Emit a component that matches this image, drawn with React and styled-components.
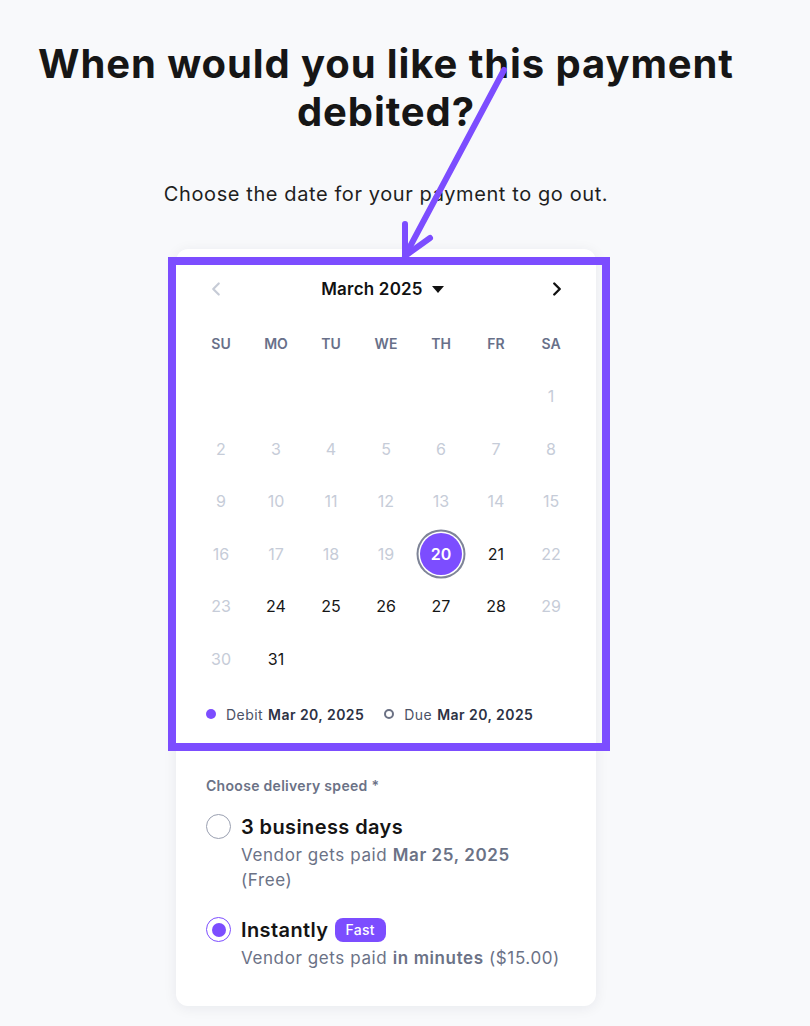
import React from "react";
import styled, { createGlobalStyle } from "styled-components";
import { ChevronLeft, ChevronRight } from "lucide-react";

const PURPLE = "#7c4dff";
const FONT = `"Inter", "Open Sans", "Noto Sans", sans-serif`;

const Global = createGlobalStyle`
  html, body { margin: 0; padding: 0; background: #f8f9fb; }
  body { font-family: ${FONT}; color: #1a1a1a; }
  * { box-sizing: border-box; }
`;

const Page = styled.div`
  position: relative;
  width: 810px;
  min-height: 1026px;
  padding: 40px 38px 0 0;
  display: flex;
  flex-direction: column;
  align-items: center;
`;

const Title = styled.h1`
  margin: 0;
  font-size: 40px;
  line-height: 48px;
  font-weight: 700;
  text-align: center;
  color: #161616;
  letter-spacing: 0.9px;
  white-space: nowrap;
`;

const Subtitle = styled.p`
  margin: 43px 0 40px;
  font-size: 20px;
  line-height: 30px;
  color: #1f1f1f;
  letter-spacing: 0.6px;
`;

const Card = styled.div`
  position: relative;
  width: 420px;
  background: #fff;
  border-radius: 12px;
  box-shadow: 0 2px 14px rgba(20, 30, 60, 0.07);
`;

const CalendarSection = styled.div`
  padding: 24px 17.5px 18px;
`;

const MonthHeader = styled.div`
  display: flex;
  align-items: center;
  justify-content: space-between;
  height: 32px;
  padding: 0 10px 0 11px;
`;

const NavButton = styled.button`
  border: 0;
  background: none;
  padding: 0;
  display: flex;
  color: ${(p) => (p.$disabled ? "#c6cbd6" : "#111")};
`;

const MonthLabel = styled.div`
  display: flex;
  align-items: center;
  gap: 9px;
  font-size: 17px;
  font-weight: 600;
  color: #111;
  letter-spacing: 0.2px;
  margin-left: -8px;
`;

const Caret = styled.span`
  width: 0;
  height: 0;
  border-left: 6px solid transparent;
  border-right: 6px solid transparent;
  border-top: 7px solid #111;
`;

const Grid = styled.div`
  margin-top: 12.5px;
  display: grid;
  grid-template-columns: repeat(7, 55px);
  grid-auto-rows: 52.5px;
`;

const DayName = styled.div`
  display: flex;
  align-items: center;
  justify-content: center;
  font-size: 14px;
  font-weight: 600;
  color: #687089;
`;

const Cell = styled.div`
  display: flex;
  align-items: center;
  justify-content: center;
`;

const Day = styled.span`
  width: 42px;
  height: 42px;
  border-radius: 50%;
  display: flex;
  align-items: center;
  justify-content: center;
  font-size: 16px;
  font-weight: ${(p) => (p.$selected ? 600 : 400)};
  color: ${(p) => (p.$selected ? "#fff" : p.$disabled ? "#c6ccd8" : "#161616")};
  background: ${(p) => (p.$selected ? PURPLE : "transparent")};
  box-shadow: ${(p) => (p.$selected ? "0 0 0 1.5px #fff, 0 0 0 3.5px #7e8497" : "none")};
`;

const Legend = styled.div`
  margin-top: 19px;
  padding-left: 12.5px;
  display: flex;
  align-items: center;
  height: 20px;
  font-size: 14px;
  color: #4b5266;
  letter-spacing: 0.45px;
`;

const LegendItem = styled.div`
  display: flex;
  align-items: center;
  margin-right: 20px;
  b { font-weight: 600; color: #2c3244; margin-left: 5px; }
`;

const Dot = styled.span`
  width: 10px;
  height: 10px;
  border-radius: 50%;
  margin-right: 10px;
  background: ${(p) => (p.$hollow ? "transparent" : PURPLE)};
  border: ${(p) => (p.$hollow ? "2px solid #6b7184" : "none")};
`;

const SpeedSection = styled.div`
  padding: 34px 30px 35px;
`;

const FieldLabel = styled.div`
  font-size: 14px;
  line-height: 20px;
  font-weight: 600;
  color: #6b7286;
  letter-spacing: 0.3px;
  margin-bottom: 16px;
`;

const Option = styled.div`
  display: grid;
  grid-template-columns: 25px 1fr;
  column-gap: 10px;
  margin-bottom: ${(p) => (p.$last ? 0 : "22px")};
`;

const Radio = styled.span`
  width: 25px;
  height: 25px;
  border-radius: 50%;
  margin-top: 2px;
  border: 1.5px solid ${(p) => (p.$checked ? PURPLE : "#9aa0b1")};
  display: flex;
  align-items: center;
  justify-content: center;
  &::after {
    content: "";
    display: ${(p) => (p.$checked ? "block" : "none")};
    width: 14px;
    height: 14px;
    border-radius: 50%;
    background: ${PURPLE};
  }
`;

const OptionTitle = styled.div`
  display: flex;
  align-items: center;
  gap: 6px;
  font-size: 20px;
  line-height: 30px;
  font-weight: 600;
  color: #141414;
  letter-spacing: 0.4px;
`;

const Badge = styled.span`
  background: ${PURPLE};
  color: #fff;
  font-size: 14px;
  font-weight: 500;
  line-height: 24px;
  padding: 0 11px;
  border-radius: 8px;
  letter-spacing: 0.3px;
`;

const OptionDesc = styled.div`
  grid-column: 2;
  font-size: 17px;
  line-height: 25px;
  color: #6b7286;
  letter-spacing: 0.6px;
  margin-top: 1px;
  b { font-weight: 600; }
`;

const Highlight = styled.div`
  position: absolute;
  left: -8px;
  top: 8px;
  width: 442px;
  height: 494px;
  border: 8px solid ${PURPLE};
  pointer-events: none;
`;

const ArrowLayer = styled.svg`
  position: absolute;
  left: 0;
  top: 0;
  width: 810px;
  height: 1026px;
  pointer-events: none;
`;

const dayNames = ["SU", "MO", "TU", "WE", "TH", "FR", "SA"];

export default function App() {
  const cells = [];
  for (let i = 0; i < 6; i++) cells.push(null);
  for (let d = 1; d <= 31; d++) cells.push(d);

  return (
    <>
      <Global />
      <Page>
        <Title>
          When would you like this payment
          <br />
          debited?
        </Title>
        <Subtitle>Choose the date for your payment to go out.</Subtitle>
        <Card>
          <CalendarSection>
            <MonthHeader>
              <NavButton $disabled>
                <ChevronLeft size={22} strokeWidth={2.4} />
              </NavButton>
              <MonthLabel>
                March 2025 <Caret />
              </MonthLabel>
              <NavButton>
                <ChevronRight size={22} strokeWidth={2.6} />
              </NavButton>
            </MonthHeader>
            <Grid>
              {dayNames.map((n) => (
                <DayName key={n}>{n}</DayName>
              ))}
              {cells.map((d, i) => {
                if (d === null) return <Cell key={"e" + i} />;
                const col = i % 7;
                const disabled = d < 20 || col === 0 || col === 6;
                return (
                  <Cell key={d}>
                    <Day $selected={d === 20} $disabled={disabled}>
                      {d}
                    </Day>
                  </Cell>
                );
              })}
            </Grid>
            <Legend>
              <LegendItem>
                <Dot />
                Debit <b>Mar 20, 2025</b>
              </LegendItem>
              <LegendItem>
                <Dot $hollow />
                Due <b>Mar 20, 2025</b>
              </LegendItem>
            </Legend>
          </CalendarSection>
          <SpeedSection>
            <FieldLabel>Choose delivery speed *</FieldLabel>
            <Option>
              <Radio />
              <OptionTitle>3 business days</OptionTitle>
              <OptionDesc>
                Vendor gets paid <b>Mar 25, 2025</b>
                <br />
                (Free)
              </OptionDesc>
            </Option>
            <Option $last>
              <Radio $checked />
              <OptionTitle>
                Instantly <Badge>Fast</Badge>
              </OptionTitle>
              <OptionDesc>
                Vendor gets paid <b>in minutes</b> ($15.00)
              </OptionDesc>
            </Option>
          </SpeedSection>
          <Highlight />
        </Card>
        <ArrowLayer viewBox="0 0 810 1026">
          <g stroke={PURPLE} strokeWidth="6" strokeLinecap="round" strokeLinejoin="round" fill="none">
            <path d="M504 70 L405 256" />
            <path d="M405 224 L405 256 L430 238" />
          </g>
        </ArrowLayer>
      </Page>
    </>
  );
}
